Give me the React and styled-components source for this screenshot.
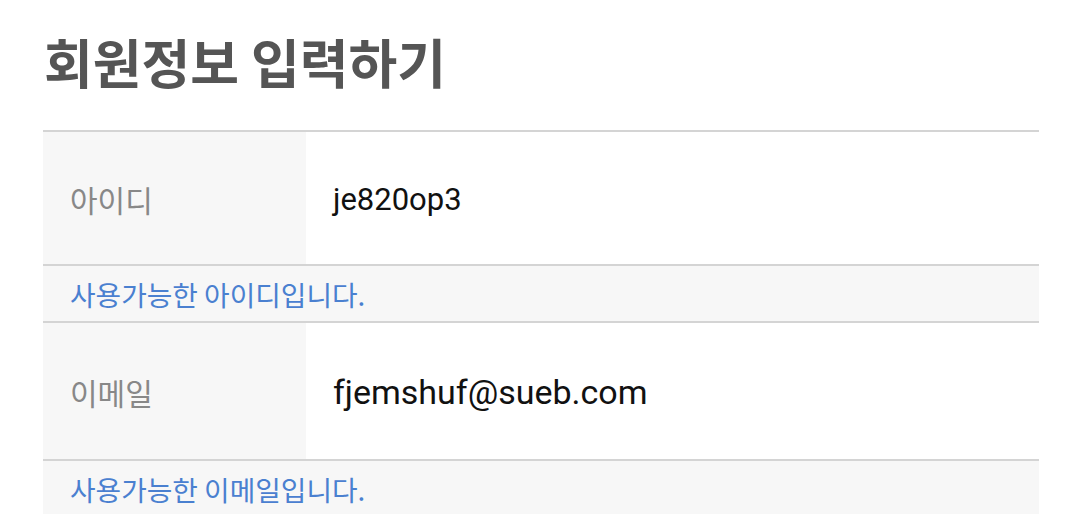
import React from "react";
import styled, { createGlobalStyle } from "styled-components";

const GlobalStyle = createGlobalStyle`
  html, body {
    margin: 0;
    padding: 0;
    background: #fff;
  }
  body {
    font-family: Roboto, "Noto Sans CJK KR", sans-serif;
  }
`;

const fields = [
  { label: "아이디", value: "je820op3", size: 31, message: "사용가능한 아이디입니다." },
  { label: "이메일", value: "fjemshuf@sueb.com", size: 34, message: "사용가능한 이메일입니다." },
];

const App = () => {
  return (
    <>
      <GlobalStyle />
      <Page>
        <Title>회원정보 입력하기</Title>
        <Form>
          {fields.map((f, i) => (
            <React.Fragment key={f.label}>
              <Row $tall={i > 0}>
                <Label>{f.label}</Label>
                <Value $size={f.size}>{f.value}</Value>
              </Row>
              <Message>{f.message}</Message>
            </React.Fragment>
          ))}
        </Form>
      </Page>
    </>
  );
};

export default App;

const Page = styled.div`
  padding: 0 41px 0 43px;
  height: 514px;
  overflow: hidden;
`;

const Title = styled.h1`
  margin: 0;
  padding: 30px 0 0 1px;
  height: 130px;
  box-sizing: border-box;
  font-family: "Noto Sans CJK KR", sans-serif;
  font-size: 53px;
  font-weight: 700;
  color: #555;
  line-height: 1.2;
`;

const Form = styled.div`
  border-top: 2px solid #d4d4d4;
`;

const Row = styled.div`
  display: grid;
  grid-template-columns: 263px 1fr;
  height: ${(p) => (p.$tall ? 136 : 132)}px;
  border-bottom: 2px solid #d4d4d4;
`;

const Label = styled.div`
  background: #f7f7f7;
  display: flex;
  align-items: center;
  padding: 2px 0 0 27px;
  font-family: "Noto Sans CJK KR", sans-serif;
  font-size: 30px;
  color: #888;
`;

const Value = styled.div`
  display: flex;
  align-items: center;
  padding: 2px 0 0 27px;
  font-family: Roboto, sans-serif;
  font-size: ${(p) => p.$size}px;
  color: #111;
`;

const Message = styled.div`
  background: #f7f7f7;
  height: 55px;
  display: flex;
  align-items: center;
  padding-left: 27px;
  border-bottom: 2px solid #d4d4d4;
  font-family: "Noto Sans CJK KR", sans-serif;
  font-size: 27.8px;
  color: #4a80d0;
`;
